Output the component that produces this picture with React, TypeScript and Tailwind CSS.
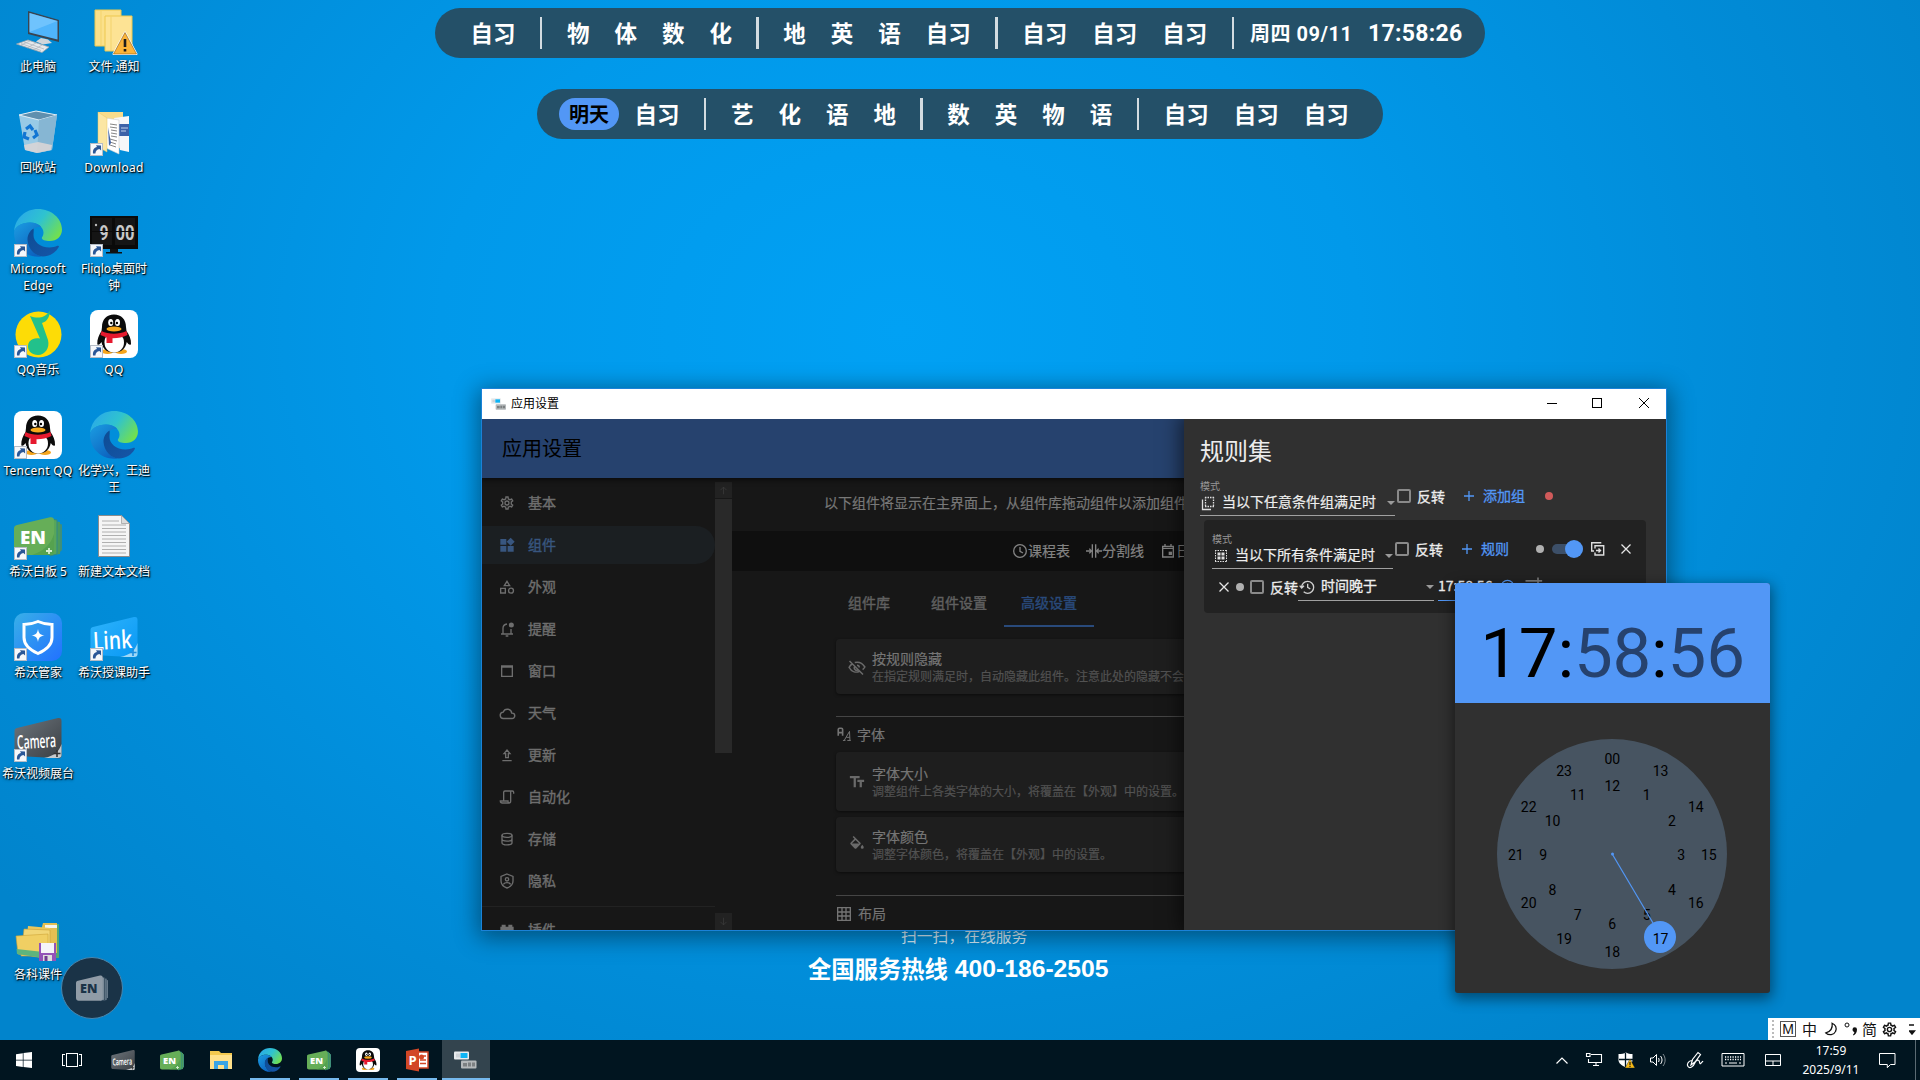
import React from "react";

const cjk = "font-['Noto_Sans_CJK_SC',sans-serif]";
const ui = "font-['Noto_Sans','Noto_Sans_CJK_SC',sans-serif]";
const app = "font-['Roboto','Noto_Sans_CJK_SC',sans-serif]";

/* ---------- generic icon ---------- */
function Ic({ size = 16, className = "", fill, d, children }: { size?: number; className?: string; fill?: boolean; d?: string; children?: React.ReactNode }) {
  return (
    <svg
      width={size}
      height={size}
      viewBox="0 0 24 24"
      className={`shrink-0 ${className}`}
      fill={fill ? "currentColor" : "none"}
      stroke={fill ? "none" : "currentColor"}
      strokeWidth={2}
    >
      {d && <path d={d} />}
      {children}
    </svg>
  );
}

const COG =
  "M12,8A4,4 0 0,1 16,12A4,4 0 0,1 12,16A4,4 0 0,1 8,12A4,4 0 0,1 12,8M12,10A2,2 0 0,0 10,12A2,2 0 0,0 12,14A2,2 0 0,0 14,12A2,2 0 0,0 12,10M10,22C9.75,22 9.54,21.82 9.5,21.58L9.13,18.93C8.5,18.68 7.96,18.34 7.44,17.94L4.95,18.95C4.73,19.03 4.46,18.95 4.34,18.73L2.34,15.27C2.21,15.05 2.27,14.78 2.46,14.63L4.57,12.97L4.5,12L4.57,11L2.46,9.37C2.27,9.22 2.21,8.95 2.34,8.73L4.34,5.27C4.46,5.05 4.73,4.96 4.95,5.05L7.44,6.05C7.96,5.66 8.5,5.32 9.13,5.07L9.5,2.42C9.54,2.18 9.75,2 10,2H14C14.25,2 14.46,2.18 14.5,2.42L14.87,5.07C15.5,5.32 16.04,5.66 16.56,6.05L19.05,5.05C19.27,4.96 19.54,5.05 19.66,5.27L21.66,8.73C21.79,8.95 21.73,9.22 21.54,9.37L19.43,11L19.5,12L19.43,13L21.54,14.63C21.73,14.78 21.79,15.05 21.66,15.27L19.66,18.73C19.54,18.95 19.27,19.04 19.05,18.95L16.56,17.95C16.04,18.34 15.5,18.68 14.87,18.93L14.5,21.58C14.46,21.82 14.25,22 14,22H10M11.25,4L10.88,6.61C9.68,6.86 8.62,7.5 7.85,8.39L5.44,7.35L4.69,8.65L6.8,10.2C6.4,11.37 6.4,12.64 6.8,13.8L4.68,15.36L5.43,16.66L7.86,15.62C8.63,16.5 9.68,17.14 10.87,17.38L11.24,20H12.76L13.13,17.39C14.32,17.14 15.37,16.5 16.14,15.62L18.57,16.66L19.32,15.36L17.2,13.81C17.6,12.64 17.6,11.37 17.2,10.2L19.31,8.65L18.56,7.35L16.15,8.39C15.38,7.5 14.32,6.86 13.12,6.62L12.75,4H11.25Z";

/* ---------- desktop icon artwork (48 x 48) ---------- */
const S = ({ size = 48, children }: { size?: number; children: React.ReactNode }) => (
  <svg width={size} height={size} viewBox="0 0 48 48" className="block shrink-0">
    {children}
  </svg>
);

const Arrow = () => (
  <g>
    <rect x="0.5" y="35.5" width="12" height="12" fill="#f6f8fb" stroke="#b5bcc6" />
    <path d="M3 45.500c-.300-4 1.200-6 4-6.500L6 37.200l5 .300.100 5-1.700-1.500c-2.500.500-3.800 2-4 4.500z" fill="#2b5797" />
  </g>
);

const ThisPC = () => (
  <S>
    <path d="M14 4l31 9v22L14 27z" fill="#3a4450" />
    <path d="M15.500 6l28 8v18.500l-28-7z" fill="#4fb4fb" />
    <path d="M15.500 6l28 8L15.500 25z" fill="#8ad0ff" opacity=".55" />
    <path d="M27 31l7 1.500 4 3.500-9 1.500-7-3z" fill="#cfd5da" />
    <path d="M14 33l21 7-7 5.500L2.500 37z" fill="#e6e9ec" stroke="#9aa3ab" strokeWidth=".8" />
    <path d="M10 35l20 7M7 36.500l20 7M16 34l-9 4M22 36l-9 5M28 38l-8 5" stroke="#aab2b9" strokeWidth=".7" />
  </S>
);

const FolderPair = () => (
  <S>
    <path d="M5 3h26v36H5z" fill="#fbe08a" stroke="#edc84f" />
    <path d="M15 9h27v35H15z" fill="#fde394" stroke="#edc84f" />
    <path d="M11 3v36M21 9v35" stroke="#f3d36c" />
    <path d="M35 25.500l11.500 21.500H23.500z" fill="#fbb43a" stroke="#fff" strokeWidth="2" strokeLinejoin="round" />
    <path d="M35 25.500l11.500 21.500H23.500z" fill="#fbb43a" stroke="#8a5a12" strokeWidth=".6" strokeLinejoin="round" />
    <path d="M35 32v8M35 42v2.600" stroke="#1c1c1c" strokeWidth="2.600" />
  </S>
);

const Bin = () => (
  <S>
    <path d="M5 7l17-4 21 4-5 35-15 3-12-3z" fill="#a9d0e8" opacity=".9" />
    <path d="M5 7l17-4 21 4-18 5z" fill="#5f8fae" stroke="#dfeef7" />
    <path d="M25 12l18-5-5 35-15 3z" fill="#86b6d3" />
    <path d="M10 37l14-3 14 3-1 5-14 3-12-3z" fill="#d8d5d6" opacity=".9" />
    <path d="M12 21l4-3 3 4M21 22l2 5-4 3M15 31l-5-2 1-5" stroke="#1276d3" strokeWidth="3.200" fill="none" />
  </S>
);

const Download = () => (
  <S>
    <g transform="translate(0 2)">
      <path d="M8 2h25v36H8z" fill="#f7dc8c" />
      <path d="M24 8l15-2v36l-9-2z" fill="#f6f7f9" />
      <path d="M29 14h10v12H29z" fill="#3d62a8" />
      <path d="M31 18h7M31 21h5" stroke="#c6d3ec" />
      <path d="M16 8l13 2v34l-13-6z" fill="#fff" stroke="#cfcfcf" strokeWidth=".6" />
      <path d="M20 14l7 1M20 17l7 1M21 20l6 1M21 23l6 1M21 26l6 1M20 29l7 2M20 32l6 2M20 35l6 2" stroke="#777" strokeWidth=".9" />
      <path d="M18 17l3 16-2 3z" fill="#3d62a8" />
      <path d="M8 2l9 6v34l-9-5z" fill="#fbe6a4" stroke="#e7c765" strokeWidth=".5" />
    </g>
    <Arrow />
  </S>
);

const Edge = ({ size = 48, link = false }: { size?: number; link?: boolean }) => (
  <S size={size}>
    <defs>
      <linearGradient id="edgeTop" x1="0" y1="0.2" x2="1" y2="0.7">
        <stop offset="0" stopColor="#2aa8ea" />
        <stop offset=".5" stopColor="#2fc3cf" />
        <stop offset="1" stopColor="#74e04c" />
      </linearGradient>
      <linearGradient id="edgeLeft" x1="0" y1="0" x2=".7" y2="1">
        <stop offset="0" stopColor="#1b9de2" />
        <stop offset="1" stopColor="#0c62bf" />
      </linearGradient>
      <linearGradient id="edgeBot" x1="0" y1="0" x2="1" y2="1">
        <stop offset="0" stopColor="#0d4c94" />
        <stop offset="1" stopColor="#1656a8" />
      </linearGradient>
    </defs>
    <path d="M.2 22C1.200 9 11.500 0 24 0c13.500 0 24 9.500 24 20.500 0 7-5.500 11.500-12 11.500-5 0-8.200-1.300-8.200-3 0-1.100 1.700-2 1.700-5.300C29.500 18 23.500 13.500 16 13.500 8 13.500 2 17.500.200 22z" fill="url(#edgeTop)" />
    <path d="M0 24c0-6 7-10.500 16-10.500 5 0 9 1.800 11.300 4.300C20 17.500 14 23.500 14 30.500c0 8.500 6.500 15.500 13.500 17C13 49.500 0 38.500 0 24z" fill="url(#edgeLeft)" />
    <path d="M19.500 19.500C15.500 22 13.300 26.500 13.500 31c.5 9 8 16.500 15.500 16.500 6.500 0 12.500-3.500 15.800-9.500.5-1-.3-1.700-1.300-1.200-2.500 1.200-5 1.700-8 1.700-9.500 0-16-6-16-12.500 0-2.500.5-4.700 0-6.500z" fill="url(#edgeBot)" />
    {link && <Arrow />}
  </S>
);

const Fliqlo = () => (
  <S>
    <path d="M0 7h48v33H0z" fill="#0a0a0a" />
    <path d="M2 9h20v27H2zM25 9h20v27H25z" fill="#151515" />
    <path d="M20 40h8v3h4v1.500H16V43h4z" fill="#111" />
    <text x="14" y="31" fontSize="21" fontWeight="700" textAnchor="middle" fill="#c9c9c9" textLength="9" lengthAdjust="spacingAndGlyphs" fontFamily="Roboto">9</text>
    <text x="35" y="31" fontSize="21" fontWeight="700" textAnchor="middle" fill="#c9c9c9" textLength="19" lengthAdjust="spacingAndGlyphs" fontFamily="Roboto">00</text>
    <path d="M0 22.500h48" stroke="#0a0a0a" />
    <circle cx="6" cy="16" r="1.200" fill="#bbb" />
    <Arrow />
  </S>
);

const QQMusic = () => (
  <S>
    <circle cx="24.500" cy="24.500" r="23" fill="#fddc06" />
    <path d="M16 6c8 3 15 2 20-5.500-.5 7-3 11-8 12.500l6 17c2 8-3 15-10 15-6 0-10-4-10-8.500C14 31 18.500 27 26 28.500L16 6z" fill="#22c18b" />
    <Arrow />
  </S>
);

const QQ = ({ size = 48, link = false }: { size?: number; link?: boolean }) => (
  <S size={size}>
    <rect width="48" height="48" rx="8" fill="#fff" />
    <ellipse cx="17.500" cy="41.500" rx="6" ry="2.600" fill="#f5a51c" />
    <ellipse cx="31" cy="41.500" rx="6" ry="2.600" fill="#f5a51c" />
    <path d="M24 4.500c-7.500 0-12 5-12 12.500L11.500 21C9 25 7 29 7.300 34c.7 2 3 0 4.200-2 1 6.500 5 10.500 12.500 10.500S35.500 38.500 36.800 32c1.200 2 3.500 4 4.200 2 .3-5-1.700-9-4.500-13L36 17C36 9.500 31.500 4.500 24 4.500z" fill="#0b0b0b" />
    <path d="M24 24c7 0 10 3 10 8.500S30 42.500 24 42.500 14.500 38 14.500 32.500 17 24 24 24z" fill="#fff" />
    <ellipse cx="20.700" cy="12.500" rx="2.500" ry="3.500" fill="#fff" />
    <ellipse cx="27.500" cy="12.500" rx="2.500" ry="3.500" fill="#fff" />
    <circle cx="21.300" cy="13" r="1.200" />
    <circle cx="26.900" cy="13" r="1.200" />
    <ellipse cx="24" cy="19" rx="7.500" ry="2.400" fill="#f7a81c" />
    <path d="M11.500 21c7 3.500 17.500 3.500 25 0l1 4c-5 2.500-10 3.300-15 3.200V33h-6v-5.500l-6-2.500z" fill="#e6192e" />
    {link && <Arrow />}
  </S>
);

const EN = ({ size = 48, link = false, mono = false }: { size?: number; link?: boolean; mono?: boolean }) => (
  <S size={size}>
    <path d="M40 9l6 1v32l-6 1z" fill={mono ? "#66798a" : "#4a9a5c"} />
    <path d="M46 12l2 .5V38l-2 2z" fill={mono ? "#66798a" : "#3f8f7a"} />
    <path d="M36 7l7 1v34l-7 2z" fill={mono ? "#7b8b99" : "#58a659"} stroke={mono ? "#1a3347" : "#2e8a86"} strokeWidth="1" />
    <path d="M3 13L36 5.300c2.500-.5 4 .7 4 3V39c0 2.500-1.500 4-4 4H4c-2.500 0-4-1.500-4-4V16.500C0 14.500 1 13.500 3 13z" fill={mono ? "#909ca7" : "#66ae58"} />
    {!mono && <path d="M40 22c-3 10-10 17-22 21h18c2.500 0 4-1.500 4-4z" fill="#4f9c4b" opacity=".7" />}
    <text x="19" y="32" fontSize="18" fontWeight="800" textAnchor="middle" fill={mono ? "#1a3347" : "#fff"} fontFamily="Open Sans" textLength="26" lengthAdjust="spacingAndGlyphs">EN</text>
    {!mono && <path d="M35 36v6M32 39h6" stroke="#d8efd2" strokeWidth="1.800" />}
    {link && <Arrow />}
  </S>
);

const Txt = () => (
  <S>
    <path d="M8.500 3.500h23l8 8v33h-31z" fill="#f5f5f5" stroke="#8c8c8c" />
    <path d="M31.500 3.500v8h8z" fill="#dcdcdc" stroke="#9a9a9a" strokeWidth=".7" />
    <path d="M12 9h17M12 13h24M12 16.500h24M12 20h24M12 23.500h24M12 27h24M12 30.500h24M12 34h24M12 37.500h24M12 41h24" stroke="#b0b0b0" />
  </S>
);

const Guard = () => (
  <S>
    <defs>
      <linearGradient id="guardBg" x1="0" y1="0" x2="1" y2="1">
        <stop offset="0" stopColor="#38b0e8" />
        <stop offset="1" stopColor="#2271ff" />
      </linearGradient>
    </defs>
    <rect width="48" height="48" rx="10" fill="url(#guardBg)" />
    <path d="M24 8.500c4.500 2 9 3 14 3v13c0 7.500-6 12.500-14 16-8-3.500-14-8.500-14-16v-13c5 0 9.500-1 14-3z" fill="none" stroke="#fff" strokeWidth="3" />
    <path d="M24 16c.8 4.500 2 5.700 6.500 6.500-4.500.8-5.700 2-6.500 6.500-.8-4.500-2-5.700-6.500-6.500 4.500-.8 5.700-2 6.500-6.500z" fill="#fff" />
    <Arrow />
  </S>
);

const Card3D = ({ size = 48, text, dark = false, link = false }: { size?: number; text: string; dark?: boolean; link?: boolean }) => (
  <S size={size}>
    <defs>
      <linearGradient id="cardDark" x1="0" y1="0" x2="1" y2="1">
        <stop offset="0" stopColor="#6d757c" />
        <stop offset="1" stopColor="#3a3f44" />
      </linearGradient>
      <linearGradient id="cardBlue" x1="0" y1="0" x2="1" y2="1">
        <stop offset="0" stopColor="#2fb4fb" />
        <stop offset="1" stopColor="#0898f5" />
      </linearGradient>
    </defs>
    <path d="M3 14L44 4c2.500-.5 3.500.5 3.500 3v34c0 2.500-1 3.500-3.500 3.300L4 42c-2.500 0-3.500-1-3.500-3.500V17.500C.5 15.500 1 14.500 3 14z" fill={dark ? "url(#cardDark)" : "url(#cardBlue)"} />
    <path d="M47.500 30C45 38 40 42 30 44h14c2.500 0 3.500-1 3.500-3z" fill={dark ? "#c6cacd" : "#9fd8f7"} />
    <text x="22.500" y={dark ? 34 : 36} fontSize={dark ? 19 : 25} fontWeight="600" textAnchor="middle" fill="#fff" fontFamily="Open Sans" textLength={39} lengthAdjust="spacingAndGlyphs" transform="rotate(-3 24 28)">{text}</text>
    <path d="M43 36v7M39.500 39.500h7" stroke={dark ? "#333" : "#1a8ee0"} strokeWidth="1.600" />
    {link && <Arrow />}
  </S>
);

const Folders = () => (
  <S>
    <g transform="translate(1 6)">
      <path d="M28 3h16v34H28z" fill="#4fa874" />
      <path d="M28 2h14v30H20z" fill="#e4bf52" />
      <path d="M30 4h12v3H30z" fill="#f5f5f0" />
      <path d="M13 5l22 2v26H10z" fill="#e9c75c" />
      <path d="M9 8l26 1v26H6z" fill="#f1d676" stroke="#c99e33" strokeWidth=".6" />
      <path d="M1 15l32-2v20l-4 4-26-4z" fill="#f0cf63" stroke="#cfa437" strokeWidth=".6" />
      <path d="M1.500 28l27 3v6L2 33z" fill="#5eb47d" />
      <path d="M24 22h17v18H24z" fill="#9353b8" />
      <path d="M26 22h13v10H26z" fill="#f4f4f8" />
      <path d="M28 34h9v6h-9z" fill="#ddd" />
      <path d="M29.500 35h3v5h-3z" fill="#6f3a91" />
    </g>
  </S>
);

const desktop: { x: string; y: string; icon: React.ReactNode; lines: string[] }[] = [
  { x: "left-[0px]", y: "top-[7px]", icon: <ThisPC />, lines: ["此电脑"] },
  { x: "left-[76px]", y: "top-[7px]", icon: <FolderPair />, lines: ["文件,通知"] },
  { x: "left-[0px]", y: "top-[108px]", icon: <Bin />, lines: ["回收站"] },
  { x: "left-[76px]", y: "top-[108px]", icon: <Download />, lines: ["Download"] },
  { x: "left-[0px]", y: "top-[209px]", icon: <Edge link />, lines: ["Microsoft", "Edge"] },
  { x: "left-[76px]", y: "top-[209px]", icon: <Fliqlo />, lines: ["Fliqlo桌面时", "钟"] },
  { x: "left-[0px]", y: "top-[310px]", icon: <QQMusic />, lines: ["QQ音乐"] },
  { x: "left-[76px]", y: "top-[310px]", icon: <QQ link />, lines: ["QQ"] },
  { x: "left-[0px]", y: "top-[411px]", icon: <QQ link />, lines: ["Tencent QQ"] },
  { x: "left-[76px]", y: "top-[411px]", icon: <Edge />, lines: ["化学兴，王迪", "王"] },
  { x: "left-[0px]", y: "top-[512px]", icon: <EN link />, lines: ["希沃白板 5"] },
  { x: "left-[76px]", y: "top-[512px]", icon: <Txt />, lines: ["新建文本文档"] },
  { x: "left-[0px]", y: "top-[613px]", icon: <Guard />, lines: ["希沃管家"] },
  { x: "left-[76px]", y: "top-[613px]", icon: <Card3D text="Link" link />, lines: ["希沃授课助手"] },
  { x: "left-[0px]", y: "top-[714px]", icon: <Card3D text="Camera" dark link />, lines: ["希沃视频展台"] },
  { x: "left-[0px]", y: "top-[915px]", icon: <Folders />, lines: ["各科课件"] },
];

/* ---------- schedule bars ---------- */
function Lesson({ t }: { t: string }) {
  return <span className={`flex h-full shrink-0 items-center justify-center ${t.length > 1 ? "w-[70px]" : "w-[47.500px]"}`}>{t}</span>;
}
function Sep() {
  return (
    <span className="flex w-[26.400px] shrink-0 justify-center">
      <span className="h-8 w-[2.500px] bg-[#d3dce1]" />
    </span>
  );
}
function Lessons({ items }: { items: string[] }) {
  return (
    <>
      {items.map((t, i) => (t === "|" ? <Sep key={i} /> : <Lesson key={i} t={t} />))}
    </>
  );
}

/* ---------- settings window ---------- */
const nav: { t: string; icon: React.ReactNode; on?: boolean }[] = [
  { t: "基本", icon: <Ic fill d={COG} /> },
  { t: "组件", on: true, icon: <Ic fill d="M2 3h9v8.500H2zM2 13.500h9V22H2zM13 13.500h9V22h-9zM17.500 1l6 6-6 6-6-6z" /> },
  { t: "外观", icon: <Ic><path d="M12 3.500l4 6.500H8zM2.500 14H9.500v7H2.500z" /><circle cx="18" cy="17.500" r="3.700" /></Ic> },
  { t: "提醒", icon: <Ic><path d="M3 19.500h18M6 19v-8c0-3.500 2.500-6 6-6.500M18 19v-7M10 22.500h4" /><circle cx="18.500" cy="6" r="3.800" fill="currentColor" stroke="none" /></Ic> },
  { t: "窗口", icon: <Ic><path d="M4 4.500h16V20H4zM4 6h16" /></Ic> },
  { t: "天气", icon: <Ic size={17}><path d="M6.500 19a4.500 4.500 0 01-.5-9 6.200 6.200 0 0112 1.500h.5a3.700 3.700 0 010 7.500z" /></Ic> },
  { t: "更新", icon: <Ic><path d="M5 20.500h14M10 16v-6H7.500L12 4.500 16.500 10H14v6z" /></Ic> },
  { t: "自动化", icon: <Ic><path d="M7 17V5c0-1.200.8-2 2-2h11c1.200 0 2 .8 2 2v2M17.500 4v14c0 2-1 3-2.500 3H5c-1.500 0-3-.8-3-3h11.500c0 2 .5 3 1.500 3" /></Ic> },
  { t: "存储", icon: <Ic><ellipse cx="12" cy="6.500" rx="7.500" ry="3" /><path d="M4.500 6.500v11c0 1.700 3.400 3.200 7.500 3.200s7.500-1.500 7.500-3.200v-11M4.500 12c0 1.700 3.400 3.200 7.500 3.200s7.500-1.500 7.500-3.200" /></Ic> },
  { t: "隐私", icon: <Ic><path d="M12 1.500l9 3.500v7c0 4.500-3.500 8.500-9 10.500C6.500 20.500 3 16.500 3 12V5z" /><circle cx="12" cy="9.500" r="2.500" /><path d="M6.500 17c1.500-2 3.500-2.500 5.500-2.500s4 .5 5.500 2.500" /></Ic> },
];

function NavRow({ t, icon, on }: { t: string; icon: React.ReactNode; on?: boolean }) {
  return (
    <div className="flex h-[42px] shrink-0 items-center">
      <div className={`flex h-[38px] w-[233px] items-center rounded-r-full pl-[17px] text-[14px] ${on ? "bg-[#1b1f22] text-[#38567f]" : "text-[#6e6e6e]"}`}>
        <span className="flex w-[29px] shrink-0">{icon}</span>
        <span className="-mt-[2px] [-webkit-text-stroke:0.4px]">{t}</span>
      </div>
    </div>
  );
}

function SettingCard({ icon, title, desc, h }: { icon: React.ReactNode; title: string; desc: string; h: string }) {
  return (
    <div className={`ml-[104px] flex w-[600px] shrink-0 items-center rounded-[4px] bg-[#1e1e1e] pl-3 shadow-[0_1px_3px_rgba(0,0,0,0.5)] ${h}`}>
      <span className="text-[#6a6a6a]">{icon}</span>
      <div className="ml-[6px] flex flex-col whitespace-nowrap pt-px [-webkit-text-stroke:0.2px]">
        <span className="text-[14px] leading-[18px] text-[#757575]">{title}</span>
        <span className="text-[12px] leading-[18px] text-[#525252]">{desc}</span>
      </div>
    </div>
  );
}

function Divider() {
  return <div className="ml-[104px] h-px w-[600px] shrink-0 bg-[#454545]" />;
}

function Box() {
  return <span className="h-[14px] w-[14px] shrink-0 rounded-[2px] border-2 border-[#8a8a8a]" />;
}
function Caret() {
  return (
    <svg width="8" height="4" viewBox="0 0 8 4" className="shrink-0 text-[#9a9a9a]">
      <path d="M0 0h8L4 4z" fill="currentColor" />
    </svg>
  );
}
const Cross = () => (
  <svg width="10" height="10" viewBox="0 0 10 10" className="shrink-0">
    <path d="M.5.5l9 9M9.500.5l-9 9" stroke="#e6e6e6" strokeWidth="1.300" />
  </svg>
);
const Plus = () => (
  <svg width="10" height="10" viewBox="0 0 10 10" className="shrink-0">
    <path d="M5 0v10M0 5h10" stroke="#5297f6" strokeWidth="1.300" />
  </svg>
);

function ModeSelect({ w, icon, text, pad }: { w: string; icon: React.ReactNode; text: string; pad: string }) {
  return (
    <div className={`flex h-[37px] shrink-0 flex-col border-b border-[#a0a0a0] ${w}`}>
      <span className="h-[14px] text-[10px] leading-[13px] text-[#979797]">模式</span>
      <div className={`flex h-5 items-center text-[14px] text-[#eee] ${pad}`}>
        {icon}
        <span className="-mt-[4px] ml-[7px] grow whitespace-nowrap leading-5 [-webkit-text-stroke:0.2px]">{text}</span>
        <Caret />
      </div>
    </div>
  );
}

function SettingsWindow() {
  return (
    <div className="absolute left-[482px] top-[389px] flex h-[541px] w-[1184px] flex-col bg-[#171717] shadow-[0_0_0_1px_#1b82d8,0_4px_22px_4px_rgba(0,0,0,0.42)]">
      <div className="flex h-[30px] shrink-0 items-center bg-white pl-[9px] text-[12px] text-black">
        <AppGlyph size={16} />
        <span className="-mt-[2px] ml-1">应用设置</span>
        <div className="ml-auto flex items-center pb-[2px] pr-[17px]">
          <svg width="102" height="10" viewBox="0 0 102 10" fill="none" stroke="#000" shapeRendering="crispEdges">
            <path d="M0 5.500h10" />
            <path d="M45.500.5h9v9h-9z" />
            <path d="M92 0l10 10M102 0L92 10" shapeRendering="auto" />
          </svg>
        </div>
      </div>
      <div className="relative flex grow flex-col overflow-hidden">
        <div className="z-10 flex h-[59px] shrink-0 items-center bg-[#26426e] pb-px pl-5 text-[20px] text-black shadow-[0_2px_5px_rgba(0,0,0,0.6)]">应用设置</div>
        <div className="flex h-[452px] overflow-hidden">
          <div className="flex w-[233px] shrink-0 flex-col pt-1">
            {nav.map((n) => (
              <NavRow key={n.t} {...n} />
            ))}
            <div className="mb-[2px] mt-1 h-px shrink-0 bg-[#222]" />
            <NavRow t="插件" icon={<Ic fill d="M2 7h2V4h6v3h4V4h6v3h2v15H2z" />} />
          </div>
          <div className="flex w-[17px] shrink-0 flex-col pt-1 text-[#3b3b3b]">
            <div className="flex h-4 items-center justify-center bg-[#222]">
              <Ic size={9} d="M12 22V3M4 11l8-8 8 8" />
            </div>
            <div className="mt-px h-[254px] bg-[#292929]" />
            <div className="mt-auto flex h-[17px] items-center justify-center bg-[#222]">
              <Ic size={9} d="M12 2v19M4 13l8 8 8-8" />
            </div>
          </div>
          <div className="flex w-[452px] flex-col overflow-hidden">
            <div className="flex h-[53px] shrink-0 items-center whitespace-nowrap pb-[5px] pl-[92px] text-[14px] text-[#787878] [-webkit-text-stroke:0.2px]">以下组件将显示在主界面上，从组件库拖动组件以添加组件</div>
            <div className="flex h-10 shrink-0 items-center whitespace-nowrap bg-[#0f0f0f] pl-[280px] text-[14px] text-[#838383]">
              <Ic><circle cx="12" cy="12" r="9.500" /><path d="M12 6v6.500l4.500 2.500" /></Ic>
              <span className="-mt-[2px] w-[58px] shrink-0 [-webkit-text-stroke:0.2px]">课程表</span>
              <Ic><path d="M9.500 2v20M14.500 2v20M0 12h8M5 8.500L8 12l-3 3.500M24 12h-8M19 8.500L16 12l3 3.500" /></Ic>
              <span className="-mt-[2px] w-[58px] shrink-0 [-webkit-text-stroke:0.2px]">分割线</span>
              <Ic><path d="M4 5h16v16H4zM4 8h16M7.500 1.500V5M16.500 1.500V5" /><path d="M13 13h5v5h-5z" fill="currentColor" stroke="none" /></Ic>
              <span className="-mt-[2px] shrink-0">日</span>
            </div>
            <div className="mt-2 flex h-12 shrink-0 pl-[92px] text-[14px] text-[#606060] [-webkit-text-stroke:0.4px]">
              <span className="flex w-[90px] items-center justify-center pb-[2px]">组件库</span>
              <span className="flex w-[90px] items-center justify-center pb-[2px]">组件设置</span>
              <span className="flex w-[90px] items-center justify-center border-b-2 border-[#294a7b] text-[#294a7b]">高级设置</span>
            </div>
            <div className="h-3 shrink-0" />
            <SettingCard
              h="h-[55px]"
              title="按规则隐藏"
              desc="在指定规则满足时，自动隐藏此组件。注意此处的隐藏不会"
              icon={<Ic size={18} d="M2 4l18 18M9 6c6-1.500 11 2 13.500 6-.8 1.400-1.800 2.600-3 3.600M5.500 8C3.800 9 2.500 10.500 1.500 12.500 4.500 18 10 20 15 18M9.500 11a3 3 0 004 4.500M12 9.500a3 3 0 013 3" />}
            />
            <div className="h-[22px] shrink-0" />
            <Divider />
            <div className="ml-[105px] flex h-[35px] shrink-0 items-center gap-[5px] text-[14px] text-[#747474]">
              <Ic size={15}><path d="M2 14V4c0-1 .7-2 2-2h3c1.300 0 2 1 2 2v10M2 9h7" strokeWidth={2.600} /><path d="M9.500 21.500h4M16.500 21.500H22M11.500 21.500L20 7l.7 14.500M15 16.500h5.500" strokeWidth={1.600} /></Ic>
              <span className="-mt-px [-webkit-text-stroke:0.200px]">字体</span>
            </div>
            <SettingCard h="h-[59px]" title="字体大小" desc="调整组件上各类字体的大小，将覆盖在【外观】中的设置。" icon={<Ic size={18} fill d="M2.500 4v3h5v12h3V7h5V4h-13M21.500 9h-9v3h3v7h3v-7h3z" />} />
            <div className="h-[6px] shrink-0" />
            <SettingCard h="h-[55px]" title="字体颜色" desc="调整字体颜色，将覆盖在【外观】中的设置。" icon={<Ic size={18} fill d="M19 11.500S17 13.670 17 15A2 2 0 0 0 19 17 2 2 0 0 0 21 15C21 13.670 19 11.500 19 11.500M5.210 10L10 5.210 14.790 10M16.560 8.940L7.620 0 6.210 1.410 8.590 3.790 3.440 8.940C2.850 9.500 2.850 10.470 3.440 11.060L8.940 16.560C9.230 16.850 9.620 17 10 17S10.770 16.850 11.060 16.560L16.560 11.060C17.150 10.470 17.150 9.500 16.560 8.940Z" />} />
            <div className="h-[23px] shrink-0" />
            <Divider />
            <div className="ml-[104px] flex h-9 shrink-0 items-center gap-[6px] text-[14px] text-[#747474]">
              <Ic d="M2.500 2.500h19v19h-19zM2.500 9h19M2.500 15h19M9 2.500v19M15 2.500v19" />
              <span className="-mt-[2px] [-webkit-text-stroke:0.2px]">布局</span>
            </div>
          </div>
        </div>

        <div className="absolute right-0 top-0 z-20 flex h-full w-[482px] flex-col bg-[#303030] pl-4 shadow-[0_0_18px_4px_rgba(0,0,0,0.55)]">
          <div className="mt-[15px] h-[37px] text-[24px] leading-8 text-[#ececec]">规则集</div>
          <div className="mt-2 flex h-[37px] shrink-0">
            <ModeSelect
              w="w-[195px]"
              pad=""
              text="当以下任意条件组满足时"
              icon={
                <svg width="15" height="15" viewBox="0 0 15 15" className="shrink-0" fill="none" stroke="#dedede">
                  <path d="M5 1.500h9M5 10.500h9M5.500 1v10M13.500 1v10" strokeDasharray="1.500 1" strokeWidth="1.300" />
                  <path d="M2.500 3.500v10h8.500" strokeWidth="1.300" />
                </svg>
              }
            />
            <div className="flex h-[34px] items-center text-[14px] text-[#eee] [-webkit-text-stroke:0.3px]">
              <span className="ml-[2px] flex"><Box /></span>
              <span className="ml-[6px] w-[47px]">反转</span>
              <Plus />
              <span className="-mt-[2px] ml-[9px] w-[62px] text-[#5297f6]">添加组</span>
              <span className="h-2 w-2 rounded-full bg-[#d05a5a]" />
            </div>
          </div>
          <div className="ml-1 mt-1 flex h-[93px] w-[442px] flex-col rounded-[4px] bg-[#222] pl-2 pt-3">
            <div className="flex h-[38px] shrink-0">
              <ModeSelect
                w="w-[181px]"
                pad="pl-[2px]"
                text="当以下所有条件满足时"
                icon={
                  <svg width="14" height="14" viewBox="0 0 14 14" className="shrink-0" fill="none" stroke="#dedede">
                    <path d="M1 1.500h12M1 12.500h12M1.500 1v12M12.500 1v12" strokeDasharray="1.500 1" />
                    <path d="M3.500 3.500h3v3h-3zM7.500 3.500h3v3h-3zM3.500 7.500h3v3h-3zM7.500 7.500h3v3h-3z" fill="#dedede" stroke="none" />
                  </svg>
                }
              />
              <div className="flex h-[34px] items-center text-[14px] text-[#eee] [-webkit-text-stroke:0.3px]">
                <span className="ml-[2px] flex"><Box /></span>
                <span className="ml-[6px] w-[47px]">反转</span>
                <Plus />
                <span className="-mt-[2px] ml-[9px] w-[55px] text-[#5297f6]">规则</span>
                <span className="h-2 w-2 rounded-full bg-[#b0b0b0]" />
                <span className="ml-[8px] flex h-[10px] w-[31px] items-center justify-end rounded-full bg-[#3c4f68]">
                  <span className="h-[18px] w-[18px] rounded-full bg-[#5297f6]" />
                </span>
                <svg width="16" height="16" viewBox="0 0 16 16" className="ml-[7px] shrink-0" fill="none" stroke="#dedede" strokeWidth="1.400">
                  <path d="M4 10H1.700V1.700h9.600M5 4.700h8.700V14H5v-2.500M5 4v3.500M6 9.500h4.500M8.500 7.500l2 2-2 2" />
                </svg>
                <span className="ml-[15px] flex"><Cross /></span>
              </div>
            </div>
            <div className="flex h-[34px] items-center text-[14px] text-[#eee] [-webkit-text-stroke:0.3px]">
              <span className="ml-[7px] flex"><Cross /></span>
              <span className="ml-[7px] h-2 w-2 rounded-full bg-[#b0b0b0]" />
              <span className="ml-[6px] flex"><Box /></span>
              <span className="ml-[6px] w-[28px] whitespace-nowrap">反转</span>
              <div className="mt-1 flex h-[27px] w-[136px] items-center self-start border-b border-[#a0a0a0]">
                <Ic className="ml-px text-[#cfcfcf]" size={16}><path d="M4 13a9 9 0 119 8.500c-2.500 0-4.500-1-6-2.300M1 10l3 3.500L7.500 10M13 7v5.500l4 2.500" /></Ic>
                <span className="-mt-[3px] ml-[6px] grow">时间晚于</span>
                <Caret />
              </div>
              <div className="ml-1 mt-1 flex h-[27px] w-[62px] items-center self-start border-b border-[#5297f6] pb-[3px]">17:58:56</div>
              <Ic size={15} className="-mt-[2px] text-[#5297f6]"><circle cx="12" cy="12" r="10" /><path d="M12 6v6l4 2" /></Ic>
              <Ic size={20} className="-mt-[4px] ml-2 text-[#7a7a7a]" d="M3 7h12M18 3v8M14 7h9" />
            </div>
          </div>
        </div>
      </div>
    </div>
  );
}

function AppGlyph({ size }: { size: number }) {
  return (
    <svg width={size} height={size} viewBox="0 0 24 24" className="shrink-0">
      <rect x="0" y="3.500" width="15" height="8" rx="1" fill="#e8ecee" />
      <rect x="2" y="5.500" width="4" height="4" fill="#cfd4d8" />
      <rect x="6.500" y="5" width="7" height="5" fill="#0db4f5" />
      <rect x="7" y="12.500" width="15.500" height="8" rx="1" fill="#b4b8ba" />
      <path d="M9 15h4v3.500H9zM14 14.500h3v4h-3zM18 14.500h3v4h-3z" fill="#7c8082" />
    </svg>
  );
}

/* ---------- time picker ---------- */
const hours = Array.from({ length: 12 }, (_, i) => {
  const a = (i * Math.PI) / 6;
  return [
    { t: i === 0 ? "00" : String(12 + i), x: 115 + 96.500 * Math.sin(a), y: 115 - 96.500 * Math.cos(a) },
    { t: i === 0 ? "12" : String(i), x: 115 + 69 * Math.sin(a), y: 115 - 69 * Math.cos(a) },
  ];
}).flat();

function TimePicker() {
  return (
    <div className={`absolute left-[1455px] top-[583px] z-30 flex h-[410px] w-[315px] flex-col overflow-hidden rounded-[3px] bg-[#303030] ${app} shadow-[0_4px_14px_2px_rgba(0,0,0,0.45)]`}>
      <div className="flex h-[120px] shrink-0 items-center justify-center bg-[#5297f6] pt-[20px] text-[69px] leading-none tracking-[-0.200px] text-black">
        <span>17</span>
        <span>:</span>
        <span className="text-[#26426e]">58</span>
        <span>:</span>
        <span className="text-[#26426e]">56</span>
      </div>
      <svg width="230" height="230" viewBox="0 0 230 230" className="ml-[42px] mt-[36px] block overflow-visible">
        <circle cx="115" cy="115" r="115" fill="#475461" />
        <circle cx="163" cy="198" r="16" fill="#5297f6" />
        {hours.map((h) => (
          <text key={h.t} x={h.x + 0.3} y={h.y + 6} fontSize="14" textAnchor="middle" fill="#000">
            {h.t}
          </text>
        ))}
        <path d="M115.500 115.500L156 184" stroke="#5297f6" strokeWidth="1.200" />
        <circle cx="115.500" cy="115" r="1.500" fill="#5297f6" />
      </svg>
    </div>
  );
}

/* ---------- taskbar ---------- */
function Task({ children, run, on }: { children: React.ReactNode; run?: boolean; on?: boolean }) {
  return (
    <div className={`flex h-10 w-12 shrink-0 flex-col items-center ${on ? "bg-[#33444e]" : ""}`}>
      <div className="flex h-[38px] items-center pt-[2px]">{children}</div>
      {run && <div className={`h-[2px] bg-[#76b9ed] ${on ? "w-12" : "w-10"}`} />}
    </div>
  );
}

function Taskbar() {
  return (
    <div className="absolute bottom-0 left-0 flex h-10 w-full bg-[#011520] text-white">
      <div className="flex">
        <Task>
          <svg width="16" height="16" viewBox="0 0 16 16" fill="#fff"><path d="M0 2.200l6.800-1v6.500H0zM7.500 1.100L16 0v7.700H7.500zM0 8.400h6.800v6.500L0 13.900zM7.500 8.400H16V16l-8.500-1.100z" /></svg>
        </Task>
        <Task>
          <svg width="20" height="14" viewBox="0 0 20 14" fill="none" stroke="#fff" shapeRendering="crispEdges"><path d="M4.500.5h11v13h-11zM3 1.500H.5v11H3M17 1.500h2.500v11H17" /></svg>
        </Task>
      </div>
      <div className="ml-[3px] flex gap-px">
        <Task><Card3D size={24} text="Camera" dark /></Task>
        <Task><EN size={24} /></Task>
        <Task>
          <svg width="22" height="19" viewBox="0 0 22 19"><path d="M0 0h9l2 2h11v16H0z" fill="#f3c84f" /><path d="M0 4h22v14H0z" fill="#ffe08a" /><path d="M4 18v-8h14v8h-4v-4H8v4z" fill="#3aa4e4" /></svg>
        </Task>
        <Task run><Edge size={24} /></Task>
        <Task run><EN size={24} /></Task>
        <Task run><QQ size={24} /></Task>
        <Task run>
          <svg width="23" height="24" viewBox="0 0 23 24"><path d="M10 4h12v16H10z" fill="#fff" stroke="#d24726" strokeWidth="1.500" /><path d="M14 8h6M14 12h6M14 15.500h6" stroke="#d24726" strokeWidth="1.400" /><circle cx="15.500" cy="9" r="2.500" fill="#d24726" /><path d="M0 3l13-2.500v23L0 21z" fill="#d24726" /><text x="6.500" y="17" fontSize="13" fontWeight="700" fill="#fff" textAnchor="middle" fontFamily="Open Sans">P</text></svg>
        </Task>
        <Task run on><AppGlyph size={24} /></Task>
      </div>

      <div className="ml-auto flex items-center">
        <svg width="12" height="7" viewBox="0 0 12 7" fill="none" stroke="#fff"><path d="M.5 6.500L6 1l5.500 5.500" strokeWidth="1.200" /></svg>
        <svg width="18" height="16" viewBox="0 0 18 16" className="ml-[17px]" fill="none" stroke="#fff"><path d="M6 2.500h10.500v8H3.500V7M8 13.500h6M11 11v2.500M1.500 1.500h3.500v3H1.500z" strokeWidth="1.100" /></svg>
        <svg width="17" height="16" viewBox="0 0 17 16" className="ml-[15px]"><path d="M8 .5c2 1 4 1.500 6.500 1.500v6c0 3.500-3 5.500-6.500 7.500C4 13.500.5 11.500.5 8V2C3.500 2 6 1.500 8 .5z" fill="#fff" /><path d="M7.500 1v14M1 7.500h14" stroke="#011520" strokeWidth="1.300" /><path d="M12 7l5 9H7z" fill="#f7b916" stroke="#011520" strokeWidth=".4" /><path d="M12 10v3.200M12 14v1" stroke="#111" strokeWidth="1.100" /></svg>
        <svg width="18" height="16" viewBox="0 0 18 16" className="ml-[14px]" fill="none" stroke="#fff"><path d="M1.500 6h2.500l3.500-3.500v11L4 10H1.500z" /><path d="M9.500 6c.8 1.300.8 2.700 0 4M11.500 4c2 2.500 2 5.500 0 8" /><path d="M14 2c2.800 3.500 2.800 8.500 0 12" opacity=".5" /></svg>
        <svg width="18" height="18" viewBox="0 0 18 18" className="ml-[19px]" fill="none" stroke="#fff" strokeWidth="1.200"><path d="M5 14L6.500 8.500 12 1.500l2.500 2L9 11zM5.500 9.500C2 10 .5 13.500 2 15.500s5 1 6.500-3 4.500-4.500 5-1.500 1.500 1.500 3.500-1" /></svg>
        <svg width="24" height="14" viewBox="0 0 24 14" className="ml-[17px]" fill="none" stroke="#fff"><path d="M1 .5h22v12.500H1z" /><path d="M4 4h16M4 6.500h16" strokeDasharray="1.200 1.300" strokeWidth="1.300" /><path d="M4 10h2M8 10h8M18 10h2" /></svg>
        <svg width="16" height="12" viewBox="0 0 16 12" className="ml-[20px]" fill="none" stroke="#fff"><path d="M.5.5h15v11H.5zM.5 7h15M8 7v4.500" /></svg>
        <div className={`ml-[15px] flex w-[70px] flex-col items-center text-[12px] leading-[19px] ${ui}`}>
          <span>17:59</span>
          <span>2025/9/11</span>
        </div>
        <svg width="17" height="17" viewBox="0 0 17 17" className="ml-[13px]" fill="none" stroke="#fff"><path d="M.5 1.500h15.500v11h-4.500L8.300 15.700V12.500H.5z" /></svg>
        <span className="ml-[19px] mr-1 h-10 w-px bg-[#5b6a73]" />
      </div>
    </div>
  );
}

function ImeBar() {
  return (
    <div className={`absolute left-[1768px] top-[1018px] flex h-[22px] w-[152px] items-center bg-white pl-1 text-[15px] text-[#111] ${cjk}`}>
      <span className="h-[18px] border-l-2 border-dotted border-[#bbb]" />
      <span className="ml-[6px] flex h-4 w-4 items-center justify-center border border-[#555] font-['Liberation_Sans',sans-serif] text-[14px] leading-none">M</span>
      <span className="ml-[6px] leading-[22px]">中</span>
      <Ic size={15} className="ml-[7px]" d="M13 2c1 7-2 13-10 15.500 5 4.500 13 3.500 15.500-2.500C21 9.500 18.500 4 13 2z" />
      <svg width="14" height="14" viewBox="0 0 14 14" className="ml-[5px] shrink-0"><circle cx="3" cy="3" r="2" fill="none" stroke="#111" /><path d="M8.500 7.500a2.200 2.200 0 114.500 0c0 3-1.500 5-3.500 6l-.5-.9c1-.8 1.300-1.500 1.300-2.500C9.500 10 8.500 9 8.500 7.500z" fill="#111" /></svg>
      <span className="ml-1 leading-[22px]">简</span>
      <Ic size={17} fill className="ml-1" d={COG} />
      <svg width="7" height="12" viewBox="0 0 7 12" className="ml-[11px] shrink-0"><path d="M0 2h5M.5 8h5L3 11z" fill="#111" stroke="#111" strokeWidth="1.500" /></svg>
    </div>
  );
}

export default function App() {
  return (
    <div className={`relative h-[1080px] w-[1920px] overflow-hidden bg-[radial-gradient(ellipse_1150px_900px_at_900px_330px,#01a1f4_0%,#0199ea_40%,#018cd8_75%,#0184cc_100%)] ${cjk}`}>
      {desktop.map((d) => (
        <div key={d.lines.join("")} className={`absolute flex w-[76px] flex-col items-center ${d.x} ${d.y} ${ui}`}>
          {d.icon}
          <div className="mt-[3px] flex flex-col items-center whitespace-nowrap text-[12px] leading-[17px] text-white [text-shadow:1px_1px_1px_#000,0_1px_3px_rgba(0,0,0,0.8)]">
            {d.lines.map((l) => (
              <span key={l} className={/^[A-Za-z ]+$/.test(l) ? "tracking-[0.300px]" : ""}>{l}</span>
            ))}
          </div>
        </div>
      ))}

      <div className="absolute left-[61px] top-[957px] flex h-[62px] w-[62px] items-center justify-center rounded-full border border-[#4a86ad] bg-[#1a3347]">
        <EN size={32} mono />
      </div>

      <div className="absolute left-[435px] top-[8px] flex h-[50px] w-[1050px] items-center rounded-full bg-[#245068] pl-[23px] text-[22.500px] font-bold text-white">
        <Lessons items={["自习", "|", "物", "体", "数", "化", "|", "地", "英", "语", "自习", "|", "自习", "自习", "自习", "|"]} />
        <span className={`ml-[4px] w-[118px] whitespace-nowrap pt-px text-[20px] tracking-[0.500px] ${app}`}>周四 09/11</span>
        <span className={`whitespace-nowrap pt-[2px] text-[23px] tracking-[0.300px] ${app}`}>17:58:26</span>
      </div>

      <div className="absolute left-[537px] top-[89px] flex h-[50px] w-[846px] items-center rounded-full bg-[#245068] pl-[22px] text-[22.500px] font-bold text-white">
        <span className="mr-[3px] flex h-8 w-[60px] shrink-0 items-center justify-center rounded-full bg-[#5297f6] text-[20px] text-black">明天</span>
        <Lessons items={["自习", "|", "艺", "化", "语", "地", "|", "数", "英", "物", "语", "|", "自习", "自习", "自习"]} />
      </div>

      <div className="absolute left-[808px] top-[924px] flex w-[310px] flex-col">
        <span className="ml-[93px] text-[15.800px] leading-6 text-[#d8f1ff]">扫一扫，在线服务</span>
        <div className="flex items-center whitespace-nowrap font-bold leading-[38px] text-white">
          <span className="text-[23.300px]">全国服务热线</span>
          <span className="ml-[7px] mt-[2px] font-['Liberation_Sans',sans-serif] text-[24.700px]">400-186-2505</span>
        </div>
      </div>

      <SettingsWindow />
      <TimePicker />
      <ImeBar />
      <Taskbar />
    </div>
  );
}
